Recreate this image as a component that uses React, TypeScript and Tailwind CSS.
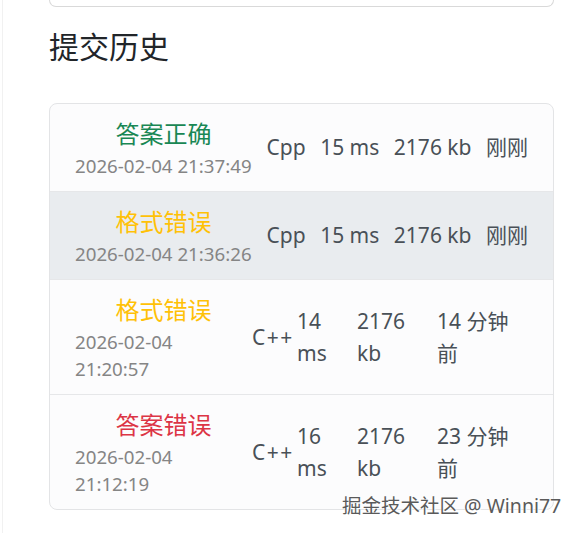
const FONT = "font-['Noto_Sans','Noto_Sans_CJK_SC',sans-serif]";

type Row = {
  status: string;
  tone: 'ok' | 'warn' | 'bad';
  time: string;
  lang: string;
  ms: string;
  kb: string;
  ago: string;
  active?: boolean;
  compact?: boolean;
};

const ROWS: Row[] = [
  { status: '答案正确', tone: 'ok', time: '2026-02-04 21:37:49', lang: 'Cpp', ms: '15 ms', kb: '2176 kb', ago: '刚刚' },
  { status: '格式错误', tone: 'warn', time: '2026-02-04 21:36:26', lang: 'Cpp', ms: '15 ms', kb: '2176 kb', ago: '刚刚', active: true },
  { status: '格式错误', tone: 'warn', time: '2026-02-04 21:20:57', lang: 'C++', ms: '14 ms', kb: '2176 kb', ago: '14 分钟前', compact: true },
  { status: '答案错误', tone: 'bad', time: '2026-02-04 21:12:19', lang: 'C++', ms: '16 ms', kb: '2176 kb', ago: '23 分钟前', compact: true },
];

const TONE = {
  ok: 'text-[#198754]',
  warn: 'text-[#ffc107]',
  bad: 'text-[#dc3545]',
};

// words stay whole, lines break only at spaces
function Words({ text }: { text: string }) {
  const parts = text.split(' ');
  return (
    <>
      {parts.map((p, i) => (
        <span key={i}>
          <span className="whitespace-nowrap">{p}</span>
          {i < parts.length - 1 ? ' ' : ''}
        </span>
      ))}
    </>
  );
}

function Submission({ row, first }: { row: Row; first: boolean }) {
  return (
    <div
      className={`flex items-center px-[25px] py-[12px] ${first ? '' : 'border-t border-[#e6e7e9]'} ${
        row.active ? 'bg-[#e9ecef]' : ''
      } ${row.compact ? '' : 'justify-between'}`}
    >
      <div className="w-[177px] shrink-0">
        <div className={`text-center text-[24px] leading-[36px] ${TONE[row.tone]}`}>{row.status}</div>
        <div className={`text-[18.7px] leading-[27px] text-[#858585] ${row.compact ? 'w-min' : 'whitespace-nowrap'}`}>
          <Words text={row.time} />
        </div>
      </div>
      {row.compact ? (
        <div className="flex items-center text-[21px] leading-[32px] text-[#495057]">
          <span className="w-[45px] shrink-0 whitespace-nowrap tracking-[1.5px]">{row.lang}</span>
          <span className="w-[60px] shrink-0">
            <span className="block w-min">
              <Words text={row.ms} />
            </span>
          </span>
          <span className="w-[80px] shrink-0">
            <span className="block w-min">
              <Words text={row.kb} />
            </span>
          </span>
          <span className="w-[78px] shrink-0">{row.ago}</span>
        </div>
      ) : (
        <>
          <span className="whitespace-nowrap text-[21px] text-[#495057]">{row.lang}</span>
          <span className="whitespace-nowrap text-[21px] text-[#495057]">{row.ms}</span>
          <span className="whitespace-nowrap text-[21px] text-[#495057]">{row.kb}</span>
          <span className="whitespace-nowrap text-[21px] text-[#495057]">{row.ago}</span>
        </>
      )}
    </div>
  );
}

export default function App() {
  return (
    <div className={`relative h-[533px] overflow-hidden bg-white ${FONT}`}>
      <div className="ml-[2px] h-full border-l border-[#f1f1f1] pl-[46px] pr-[27px]">
        <div className="h-[7px] rounded-b-[8px] border-x border-b border-[#d9d9d9]" />
        <h2 className="mt-[22px] text-[30px] leading-[36px] font-normal text-[#212529]">提交历史</h2>
        <div className="mt-[38px] overflow-hidden rounded-[8px] border border-[#e3e4e6] bg-[#fcfcfd]">
          {ROWS.map((row, i) => (
            <Submission key={row.time} row={row} first={i === 0} />
          ))}
        </div>
      </div>
      <div className="absolute left-[342px] top-[493px] whitespace-nowrap text-[19.5px] leading-[26px] text-[#5a5a5a] [text-shadow:0_0_2px_#fff,1px_1px_1px_#fff]">
        掘金技术社区 @ Winni77
      </div>
    </div>
  );
}
